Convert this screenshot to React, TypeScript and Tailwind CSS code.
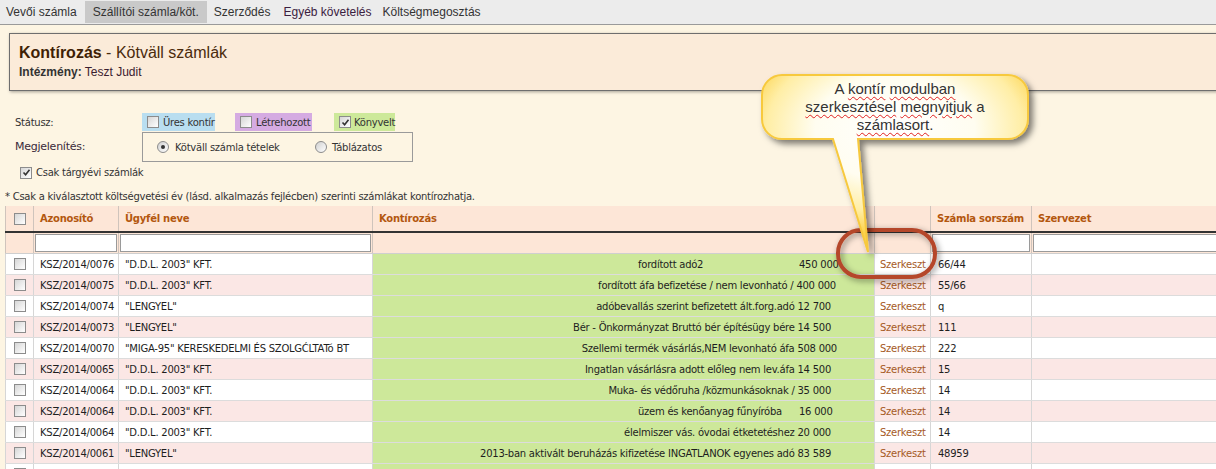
import React from "react";

const Check = ({ checked }: { checked?: boolean }) => (
  <span className="inline-flex w-[12px] h-[12px] border border-[#8c8c8c] bg-[linear-gradient(135deg,#d6d6d6,#ffffff)] items-center justify-center shrink-0">
    {checked && (
      <svg width="9" height="9" viewBox="0 0 9 9">
        <path d="M1.5 4.5 L3.6 6.8 L7.5 1.8" stroke="#333" strokeWidth="1.6" fill="none" />
      </svg>
    )}
  </span>
);

const Radio = ({ checked }: { checked?: boolean }) => (
  <span className="inline-flex w-[12px] h-[12px] rounded-full border border-[#8c8c8c] bg-[linear-gradient(135deg,#d0d0d0,#ffffff)] items-center justify-center shrink-0">
    {checked && <span className="w-[4px] h-[4px] rounded-full bg-[#333]" />}
  </span>
);

type Row = {
  id: string;
  name: string;
  k?: string;
  kText?: string;
  kAmt?: string;
  pr?: string;
  num: string;
};

const rows: Row[] = [
  { id: "KSZ/2014/0076", name: '"D.D.L. 2003" KFT.', kText: "fordított adó2", kAmt: "450 000", num: "66/44" },
  { id: "KSZ/2014/0075", name: '"D.D.L. 2003" KFT.', k: "fordított áfa befizetése / nem levonható / 400 000", pr: "pr-[38px]", num: "55/66" },
  { id: "KSZ/2014/0074", name: '"LENGYEL"', k: "adóbevallás szerint befizetett ált.forg.adó 12 700", pr: "pr-[43px]", num: "q" },
  { id: "KSZ/2014/0073", name: '"LENGYEL"', k: "Bér - Önkormányzat Bruttó bér építésügy bére 14 500", pr: "pr-[43px]", num: "111" },
  { id: "KSZ/2014/0070", name: '"MIGA-95" KERESKEDELMI ÉS SZOLGĆLTATó BT', k: "Szellemi termék vásárlás,NEM levonható áfa 508 000", pr: "pr-[37px]", num: "222" },
  { id: "KSZ/2014/0065", name: '"D.D.L. 2003" KFT.', k: "Ingatlan vásárlásra adott előleg nem lev.áfa 14 500", pr: "pr-[43px]", num: "15" },
  { id: "KSZ/2014/0064", name: '"D.D.L. 2003" KFT.', k: "Muka- és védőruha /közmunkásoknak / 35 000", pr: "pr-[43px]", num: "14" },
  { id: "KSZ/2014/0064", name: '"D.D.L. 2003" KFT.', kText: "üzem és kenőanyag fűnyíróba", kAmt: "16 000", num: "14" },
  { id: "KSZ/2014/0064", name: '"D.D.L. 2003" KFT.', k: "élelmiszer vás. óvodai étketetéshez 20 000", pr: "pr-[43px]", num: "14" },
  { id: "KSZ/2014/0061", name: '"LENGYEL"', k: "2013-ban aktivált beruházás kifizetése INGATLANOK egyenes adó 83 589", pr: "pr-[43px]", num: "48959" },
  { id: "", name: "", k: "", pr: "pr-[43px]", num: "" },
];

const cols = "grid grid-cols-[29px_85px_254px_502px_56px_101px_220px]";
const wavy = "underline decoration-wavy decoration-[#e02020] decoration-1 underline-offset-2";

export default function App() {
  return (
    <div className="relative w-[1216px] h-[469px] overflow-hidden bg-[#fdf5e3] font-['DejaVu_Sans',Verdana,sans-serif] text-[10px] tracking-[-0.25px] text-[#1e1e1e]">
      {/* top nav */}
      <div className="h-[25px] bg-[#ececec] border-b border-[#9a9a9a] flex items-start pt-[1px] font-['Liberation_Sans',Arial,sans-serif] text-[12px] tracking-normal text-[#333]">
        <div className="h-[22px] flex items-center pl-[6px] pr-[8px]">Vevői számla</div>
        <div className="h-[22px] flex items-center px-[8px] bg-[#c9c9c9]">Szállítói számla/köt.</div>
        <div className="h-[22px] flex items-center px-[7px]">Szerződés</div>
        <div className="h-[22px] flex items-center px-[6px] text-[#3a2040]">Egyéb követelés</div>
        <div className="h-[22px] flex items-center px-[5px]">Költségmegosztás</div>
      </div>

      {/* header box */}
      <div className="mt-[8px] ml-[9px] w-[1230px] h-[58px] bg-[#fbebd9] border border-[#6e6e6e] shadow-[1px_1px_3px_rgba(0,0,0,0.35)] pl-[9px] pt-[9px] font-['Liberation_Sans',Arial,sans-serif] tracking-normal">
        <div className="text-[16px] leading-[20px] text-[#4a2a0c]">
          <span className="font-bold text-[#3f1f05]">Kontírozás</span> - Kötväll számlák
        </div>
        <div className="mt-[2px] text-[12px] leading-[14px] text-[#333]">
          <span className="font-bold">Intézmény:</span> <span className="text-[#3a2030]">Teszt Judit</span>
        </div>
      </div>

      {/* filters */}
      <div className="pl-[15px] mt-[22px] text-[#333]">
        <div className="flex items-center h-[18px]">
          <div className="w-[127px]">Státusz:</div>
          <div className="w-[73px] h-[18px] bg-[#b9def0] flex items-center pl-[5px] gap-[4px] whitespace-nowrap">
            <Check />
            <span>Üres kontír</span>
          </div>
          <div className="ml-[20px] w-[77px] h-[18px] bg-[#d5abe2] flex items-center pl-[5px] gap-[4px] whitespace-nowrap">
            <Check />
            <span>Létrehozott</span>
          </div>
          <div className="ml-[22px] w-[61px] h-[18px] bg-[#cde99a] flex items-center pl-[5px] gap-[3px] whitespace-nowrap">
            <Check checked />
            <span>Könyvelt</span>
          </div>
        </div>
        <div className="flex items-center mt-[1px]">
          <div className="w-[127px] text-[11px] text-[#3a2a3a]">Megjelenítés:</div>
          <div className="w-[271px] h-[30px] border border-[#9a9a9a] flex items-center pl-[14px] whitespace-nowrap">
            <Radio checked />
            <span className="ml-[6px] w-[140px]">Kötväll számla tételek</span>
            <Radio />
            <span className="ml-[5px]">Táblázatos</span>
          </div>
        </div>
        <div className="flex items-center mt-[4px] ml-[5px] h-[13px]">
          <Check checked />
          <span className="ml-[4px]">Csak tárgyévi számlák</span>
        </div>
      </div>
      <div className="mt-[11px] pl-[5px] leading-[13px] text-[#333]">
        * Csak a kiválasztott költségvetési év (lásd. alkalmazás fejlécben) szerinti számlákat kontírozhatja.
      </div>

      {/* table */}
      <div className="mt-[3px] ml-[5px] w-[1250px]">
        <div className={`${cols} h-[25px] bg-[#fde6d7] font-bold text-[#b3570f]`}>
          <div className="border-l border-r border-[#cfc4bc] flex items-center justify-center">
            <Check />
          </div>
          <div className="border-r border-[#cfc4bc] flex items-center pl-[6px]">Azonosító</div>
          <div className="border-r border-[#cfc4bc] flex items-center pl-[6px]">Ügyfél neve</div>
          <div className="border-r border-[#cfc4bc] flex items-center pl-[6px]">Kontírozás</div>
          <div className="border-r border-[#cfc4bc]" />
          <div className="border-r border-[#cfc4bc] flex items-center pl-[6px]">Számla sorszám</div>
          <div className="flex items-center pl-[6px]">Szervezet</div>
        </div>
        <div className="h-[2px] bg-[#333]" />
        <div className={`${cols} h-[21px] bg-[#fde6d7] border-b border-[#cfcfcf]`}>
          <div className="border-l border-r border-[#cfc4bc]" />
          <div className="border-r border-[#cfc4bc] flex items-center pl-[1px]">
            <div className="w-[82px] h-[18px] bg-white border border-[#9a9a9a]" />
          </div>
          <div className="border-r border-[#cfc4bc] flex items-center pl-[1px]">
            <div className="w-[251px] h-[18px] bg-white border border-[#9a9a9a]" />
          </div>
          <div className="border-r border-[#cfc4bc]" />
          <div className="border-r border-[#cfc4bc]" />
          <div className="border-r border-[#cfc4bc] flex items-center pl-[1px]">
            <div className="w-[98px] h-[18px] bg-white border border-[#9a9a9a]" />
          </div>
          <div className="flex items-center pl-[1px]">
            <div className="w-[216px] h-[18px] bg-white border border-[#9a9a9a]" />
          </div>
        </div>
        {rows.map((r, i) => {
          const bg = i % 2 === 1 ? "bg-[#fbe7e5]" : "bg-white";
          return (
            <div key={i} className={`${cols} h-[21px] border-b border-[#dcdcdc] ${bg} whitespace-nowrap`}>
              <div className="border-l border-r border-[#d6d6d6] flex items-center justify-center">
                <Check />
              </div>
              <div className="border-r border-[#d6d6d6] flex items-center pl-[6px]">{r.id}</div>
              <div className="border-r border-[#d6d6d6] flex items-center pl-[6px] overflow-hidden">{r.name}</div>
              {r.kText !== undefined ? (
                <div className="border-r border-[#d6d6d6] bg-[#cde89a] flex items-center pl-[265px]">
                  <span className="w-[161px]">{r.kText}</span>
                  <span>{r.kAmt}</span>
                </div>
              ) : (
                <div className={`border-r border-[#d6d6d6] bg-[#cde89a] flex items-center justify-end ${r.pr ?? ""}`}>{r.k}</div>
              )}
              <div className="border-r border-[#d6d6d6] flex items-center pl-[5px] text-[#a5591f]">{r.id ? "Szerkeszt" : ""}</div>
              <div className="border-r border-[#d6d6d6] flex items-center pl-[7px]">{r.num}</div>
              <div />
            </div>
          );
        })}
      </div>

      {/* red highlight ring */}
      <svg className="absolute left-[826px] top-[218px]" width="124" height="72" viewBox="0 0 124 72">
        <defs>
          <filter id="ringShadow" x="-20%" y="-30%" width="140%" height="160%">
            <feDropShadow dx="2" dy="2" stdDeviation="3" floodColor="#000" floodOpacity="0.45" />
          </filter>
        </defs>
        <rect x="12" y="12" width="97" height="47" rx="23" ry="23" fill="none" stroke="#b5472c" strokeWidth="4" filter="url(#ringShadow)" />
      </svg>

      {/* callout bubble */}
      <svg className="absolute left-[750px] top-[65px]" width="300" height="200" viewBox="0 0 300 200">
        <defs>
          <radialGradient id="bubbleFill" cx="50%" cy="30%" r="60%">
            <stop offset="0%" stopColor="#ffffff" />
            <stop offset="50%" stopColor="#fffdf0" />
            <stop offset="80%" stopColor="#ffeea6" />
            <stop offset="100%" stopColor="#fcd34d" />
          </radialGradient>
          <filter id="bubbleShadow" x="-10%" y="-10%" width="130%" height="130%">
            <feDropShadow dx="4" dy="4" stdDeviation="3" floodColor="#000" floodOpacity="0.5" />
          </filter>
        </defs>
        <path
          d="M32,10 H258 A20,20 0 0 1 278,30 V54 A20,20 0 0 1 258,74 H108 L118,187 L83,74 H32 A20,20 0 0 1 12,54 V30 A20,20 0 0 1 32,10 Z"
          fill="url(#bubbleFill)"
          stroke="#f7c93e"
          strokeWidth="2"
          filter="url(#bubbleShadow)"
        />
      </svg>
      <div className="absolute left-[762px] top-[80px] w-[266px] text-center font-['Liberation_Sans',Arial,sans-serif] text-[15px] leading-[18px] tracking-normal text-[#333]">
        <div>
          A <span className={wavy}>kontír</span> <span className={wavy}>modulban</span>
        </div>
        <div>
          <span className={wavy}>szerkesztésel</span> <span className={wavy}>megnyitjuk</span> a
        </div>
        <div>
          <span className={wavy}>számlasort</span>.
        </div>
      </div>
    </div>
  );
}
